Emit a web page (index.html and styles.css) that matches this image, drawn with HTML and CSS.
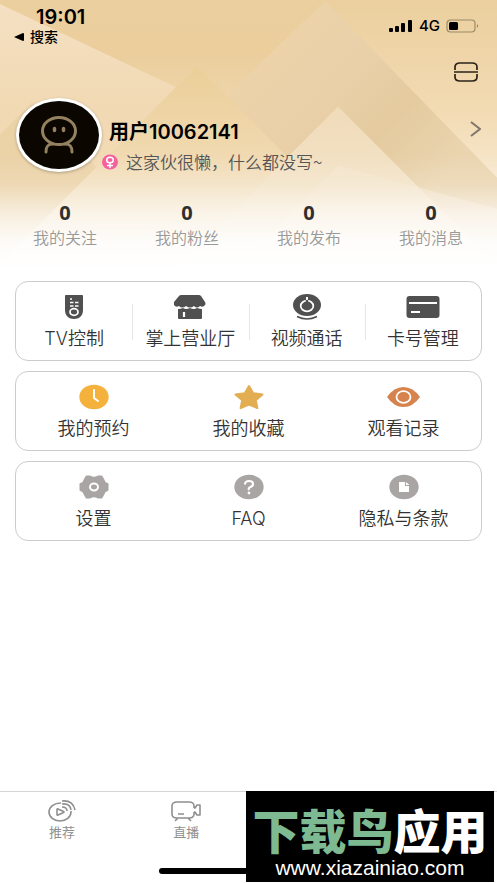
FILE: index.html
```html
<!DOCTYPE html>
<html lang="zh-CN">
<head>
<meta charset="utf-8">
<meta name="viewport" content="width=device-width, initial-scale=1">
<title>我的</title>
<link rel="stylesheet" href="styles.css">
</head>
<body>
<div class="app">
  <header class="hero">
    <svg class="hero-art" viewBox="0 0 497 270" preserveAspectRatio="none" aria-hidden="true">
      <defs>
        <linearGradient id="sky" x1="0" y1="0" x2="0" y2="1"><stop offset="0" stop-color="#ebcf9e"/><stop offset=".2" stop-color="#ebce9c"/><stop offset=".4" stop-color="#efd6ad"/><stop offset="1" stop-color="#f5e3c6"/></linearGradient>
        <linearGradient id="left" x1="0" y1="0" x2="0" y2="1"><stop offset="0" stop-color="#f4e0c2"/><stop offset=".4" stop-color="#f1d9b3"/><stop offset="1" stop-color="#f2dcb8"/></linearGradient>
        <linearGradient id="peak" gradientUnits="userSpaceOnUse" x1="250" y1="50" x2="410" y2="210"><stop offset="0" stop-color="#edd3a9"/><stop offset=".4" stop-color="#e9d0a9"/><stop offset=".65" stop-color="#e4ca9e"/><stop offset="1" stop-color="#ead5b0"/></linearGradient>
        <linearGradient id="gold" x1="0" y1="0" x2="0" y2="1"><stop offset="0" stop-color="#ebcf99"/><stop offset=".4" stop-color="#f0d8ae"/><stop offset=".6" stop-color="#f3e1c2"/></linearGradient>
        <linearGradient id="right" x1="0" y1="0" x2="0" y2="1"><stop offset="0" stop-color="#ebcf9e"/><stop offset=".6" stop-color="#f2dab2"/><stop offset="1" stop-color="#f7e8ce"/></linearGradient>
        <linearGradient id="front" x1="0" y1="0" x2="0" y2="1"><stop offset="0" stop-color="#f0dbb9"/><stop offset=".5" stop-color="#f3e3c7"/></linearGradient>
        <linearGradient id="fade" x1="0" y1="0" x2="0" y2="1"><stop offset="0" stop-color="#fff" stop-opacity="0"/><stop offset=".25" stop-color="#fff" stop-opacity=".15"/><stop offset=".5" stop-color="#fff" stop-opacity=".62"/><stop offset=".75" stop-color="#fff" stop-opacity=".92"/><stop offset="1" stop-color="#fff"/></linearGradient>
      </defs>
      <path fill="url(#sky)" d="M0 0h497v270H0z"/>
      <path fill="url(#left)" d="M0 4 176 87 0 263z"/>
      <path fill="#ebd2a7" d="M0 134 32 102 170 240v30H0z"/>
      <path fill="url(#right)" d="M325 1V0h172v177z"/>
      <path fill="url(#peak)" d="M325 1 220 102v168h277v-93z"/>
      <path fill="url(#gold)" d="M197 66 0 263v7h401z"/>
      <path fill="url(#front)" d="M338 106 174 270h328z"/>
      <path fill="#f5e8d2" d="M338 165 497 208v62H233z" opacity=".5"/>
      <path fill="url(#fade)" d="M0 155h497v115H0z"/>
    </svg>

    <div class="status">
      <div class="status-left">
        <span class="time">19:01</span>
        <a class="back" href="#"><svg width="10" height="8" viewBox="0 0 10 8" aria-hidden="true"><path d="M0 4 9 0q1 0 1 1v6q0 1-1 1z"/></svg>搜索</a>
      </div>
      <div class="status-right">
        <svg width="24" height="12" viewBox="0 0 24 12" aria-hidden="true"><rect y="8" width="4" height="4" rx="1"/><rect x="6" y="6" width="4" height="6" rx="1"/><rect x="12" y="3" width="4" height="9" rx="1"/><rect x="19" width="4" height="12" rx="1"/></svg>
        <span class="network">4G</span>
        <svg width="33" height="14" viewBox="0 0 33 14" aria-hidden="true"><rect x="1" y="1" width="28" height="12" rx="3.5" fill="none" stroke="#9c8a69" stroke-width="1.2"/><rect x="3" y="3" width="9" height="8" rx="1.5"/><path d="M31 5q2 2 0 4z" fill="#8d7b5a"/></svg>
      </div>
    </div>

    <div class="actions">
      <button class="icon-button" type="button" aria-label="扫一扫"><svg width="24" height="20" viewBox="0 0 24 20" fill="none" stroke="#2b241a" stroke-width="1.7"><path d="M1 8V5q0-4 5-4h12q5 0 5 4v3M1 12v3q0 4 5 4h12q5 0 5-4v-3M0 10h24"/></svg></button>
    </div>

    <section class="profile">
      <div class="avatar"><svg width="36" height="38" viewBox="0 0 36 38" fill="none" stroke="#93815f" stroke-width="3" stroke-linecap="round" aria-hidden="true"><ellipse cx="18" cy="15" rx="16.5" ry="13.500"/><path d="M5 36c0-6 2-8 7-8M31 36c0-6-2-8-7-8"/><path d="M13.500 12.500v2M22.500 12.500v2" stroke-width="3.500"/></svg></div>
      <div class="identity">
        <h1 class="name">用户10062141</h1>
        <p class="bio"><svg width="16" height="16" viewBox="0 0 16 16" aria-hidden="true"><ellipse cx="8" cy="8" rx="8" ry="7.500" fill="#f5609e"/><g fill="none" stroke="#fff" stroke-width="1.500"><ellipse cx="8" cy="6" rx="3.300" ry="2.800"/><path d="M8 9v5M5 11.500h6"/></g></svg>这家伙很懒，什么都没写~</p>
      </div>
      <a class="more" href="#" aria-label="个人资料"><svg width="12" height="18" viewBox="0 0 12 18" fill="none" stroke="#80776a" stroke-width="2"><path d="m2 2 9 7-9 7"/></svg></a>
    </section>

    <nav class="stats" aria-label="统计">
      <a href="#"><strong>0</strong><span>我的关注</span></a>
      <a href="#"><strong>0</strong><span>我的粉丝</span></a>
      <a href="#"><strong>0</strong><span>我的发布</span></a>
      <a href="#"><strong>0</strong><span>我的消息</span></a>
    </nav>
  </header>

  <main class="cards">
    <section class="card card-four">
      <a href="#"><svg width="20" height="26" viewBox="0 0 20 26" aria-hidden="true"><path fill="#505050" d="M1 2q0-1 1-1h16q1 0 1 1v14c0 6-4 9-9 9s-9-3-9-9z"/><path stroke="#fff" stroke-width="1.500" d="M6 5h2M6 8.500h3.500M11 8.500h3.500M6 12h3.500M11 12h3.500"/><ellipse cx="10" cy="18" rx="4" ry="3.300" fill="none" stroke="#fff" stroke-width="1.700"/></svg><span>TV控制</span></a>
      <a href="#"><svg width="32" height="26" viewBox="0 0 32 26" aria-hidden="true"><path fill="#505050" d="M7 1h18q1 0 2 1l4 6q1 2 0 3-2 3-5 1-3 3-6 0-4 3-8 0-4 3-7 0-3 2-5-1-1-1 0-3l5-6q1-1 2-1z"/><path fill="#505050" d="M4 15q3 0 5-1 3 2 7 0 4 2 7 0 3 1 5 1v9q0 1-1 1H5q-1 0-1-1z"/><path stroke="#fff" stroke-width="2.200" d="M10 18v5"/></svg><span>掌上营业厅</span></a>
      <a href="#"><svg width="28" height="26" viewBox="0 0 28 26" aria-hidden="true"><ellipse cx="14" cy="11" rx="14" ry="11" fill="#505050"/><g fill="none" stroke="#fff"><ellipse cx="14" cy="12" rx="6.300" ry="5.300" stroke-width="1.700"/><path d="M14 3v3" stroke-width="2"/></g><circle cx="14" cy="7" r="1.300" fill="#505050"/><path fill="none" stroke="#505050" stroke-width="1.600" d="M4 22.500q10 5 20 0"/></svg><span>视频通话</span></a>
      <a href="#"><svg width="34" height="24" viewBox="0 0 34 24" aria-hidden="true"><rect x=".5" y="1" width="33" height="22" rx="3" fill="#505050"/><path stroke="#fff" stroke-width="2" d="M3 8h28M5 17h9"/></svg><span>卡号管理</span></a>
    </section>

    <section class="card card-three">
      <a href="#"><svg width="30" height="26" viewBox="0 0 30 26" aria-hidden="true"><ellipse cx="15" cy="13" rx="14.700" ry="12.200" fill="#f4b13c"/><path fill="none" stroke="#fff" stroke-width="2" stroke-linecap="round" stroke-linejoin="round" d="M15 6v8l4 3"/></svg><span>我的预约</span></a>
      <a href="#"><svg width="30" height="26" viewBox="0 0 30 26" aria-hidden="true"><path fill="#e3ad52" stroke="#e3ad52" stroke-width="2" stroke-linejoin="round" d="m15 2 4.200 7.200 9.300 1.400-6.700 5.600 1.600 7.900L15 20.500 6.600 24.100l1.600-7.900-6.700-5.600 9.300-1.400z"/></svg><span>我的收藏</span></a>
      <a href="#"><svg width="33" height="22" viewBox="0 0 33 22" aria-hidden="true"><path fill="#d6834d" d="M0 11Q7 1 16.500 1T33 11q-7 10-16.500 10T0 11z"/><ellipse cx="16.500" cy="11" rx="7" ry="5.800" fill="none" stroke="#fff" stroke-width="1.800"/></svg><span>观看记录</span></a>
    </section>

    <section class="card card-three">
      <a href="#"><svg width="30" height="24" viewBox="0 0 30 24" aria-hidden="true"><path fill="#a8a5a4" stroke="#a8a5a4" stroke-width="2" stroke-linejoin="round" d="M7.500 1.500H11q4 2.500 8 0h3.500L25 6q0 2 3.500 3v6Q25 16 25 18l-2.500 4.500H19q-4-2.500-8 0H7.500L5 18q0-2-3.500-3V9Q5 8 5 6z"/><ellipse cx="15" cy="12" rx="4" ry="3.400" fill="none" stroke="#fff" stroke-width="2"/></svg><span>设置</span></a>
      <a href="#"><svg width="30" height="26" viewBox="0 0 30 26" aria-hidden="true"><ellipse cx="15" cy="13" rx="14.700" ry="12.200" fill="#a8a5a4"/><path fill="none" stroke="#fff" stroke-width="2.200" d="M11 10.500q0-3.500 4-3.500t4 3q0 2-2.500 3T15 16"/><circle cx="15" cy="19" r="1.400" fill="#fff"/></svg><span>FAQ</span></a>
      <a href="#"><svg width="30" height="26" viewBox="0 0 30 26" aria-hidden="true"><ellipse cx="15" cy="13" rx="14.700" ry="12.200" fill="#a8a5a4"/><path fill="#fff" d="M10 8h6v4h4v6H10zM17 8l3.500 3H17z"/></svg><span>隐私与条款</span></a>
    </section>
  </main>

  <footer class="dock">
    <nav class="tabs" aria-label="主导航">
      <a href="#"><svg width="28" height="22" viewBox="0 0 28 22" fill="none" stroke="#8f8f8f" stroke-width="1.600" aria-hidden="true"><path d="M13 3C6 3 1 7 1 12s5 9 11 9 11-4 11-9v-1"/><path d="M9 9.500q0-1 1-.6l5.500 2.500q1 .6 0 1.200L10 15q-1 .4-1-.6zM14 7q5 0 5 4M14 4q8-1 9 6M14 1q11-1 13 9"/></svg><span>推荐</span></a>
      <a href="#"><svg width="30" height="22" viewBox="0 0 30 22" fill="none" stroke="#8f8f8f" stroke-width="1.600" stroke-linejoin="round" aria-hidden="true"><path d="M23 8V6q0-4-5-4H6Q1 2 1 6v8q0 4 5 4h12q5 0 5-4v-2M23 8h1l2-3h3v10h-3l-2-3h-1M7 18l-3 3M17 18l3 3M7 14h6"/></svg><span>直播</span></a>
    </nav>
    <div class="home-bar"></div>
  </footer>

  <aside class="badge">
    <div class="badge-title"><span>下载鸟</span>应用</div>
    <div class="badge-url">www.xiazainiao.com</div>
  </aside>
</div>
</body>
</html>
```
FILE: styles.css
```css
* { box-sizing: border-box; }

body {
  margin: 0;
  background: #fff;
  color: #333;
  font-family: "Liberation Sans", "Noto Sans CJK SC", sans-serif;
}

a { color: inherit; text-decoration: none; }
svg { display: block; flex: none; }

.app {
  position: relative;
  display: flex;
  flex-direction: column;
  min-height: 100vh;
  overflow: hidden;
}

.hero { position: relative; padding-bottom: 22px; }

.hero-art {
  position: absolute;
  inset: 0;
  z-index: -1;
  width: 100%;
  height: 100%;
}

.status {
  display: flex;
  justify-content: space-between;
  padding: 7px 18px 0 14px;
  color: #000;
}

.status-left { display: flex; flex-direction: column; }

.time {
  padding-left: 22px;
  font: 600 20px/20px Inter, sans-serif;
}

.back {
  display: flex;
  align-items: center;
  gap: 6px;
  font-size: 14px;
  font-weight: 500;
  line-height: 20px;
}

.status-right {
  display: flex;
  align-items: center;
  gap: 6px;
  height: 38px;
}

.network { font: 500 15px/20px Inter, sans-serif; }

.actions {
  display: flex;
  justify-content: flex-end;
  padding: 15px 19px 0;
}

.icon-button {
  padding: 0;
  border: 0;
  background: none;
}

.profile {
  display: flex;
  padding: 16px 16px 0;
}

.avatar {
  display: flex;
  flex: none;
  align-items: center;
  justify-content: center;
  width: 86px;
  height: 74px;
  border: 3px solid #fff;
  border-radius: 50%;
  background: #0b0700;
  box-shadow: 0 1px 3px #0004;
}

.identity { flex: 1; padding-top: 20px; }

.name {
  margin: 0;
  padding-left: 7px;
  color: #000;
  font: 600 20px/28px Inter, "Noto Sans CJK SC", sans-serif;
}

.bio {
  display: flex;
  align-items: center;
  gap: 8px;
  margin: 4px 0 0;
  color: #555;
  font: 350 17px/24px "Noto Sans CJK SC", sans-serif;
}

.more { align-self: flex-start; padding-top: 22px; }

.stats {
  display: grid;
  grid-template-columns: repeat(4, 1fr);
  padding: 27px 5px 0 4px;
  text-align: center;
}

.stats strong {
  display: block;
  color: #2f2f2f;
  font: 700 20px/24px "Open Sans", sans-serif;
}

.stats span {
  display: block;
  color: #999;
  font: 350 16px/24px "Noto Sans CJK SC", sans-serif;
}

.cards {
  display: grid;
  gap: 10px;
  padding: 10px 15px;
}

.card {
  display: grid;
  padding: 11px 0 9px;
  border: 1px solid #ccc;
  border-radius: 13px;
  background: #fff;
}

.card-four { grid-template-columns: repeat(4, 1fr); }
.card-three { grid-template-columns: repeat(3, 1fr); }

.card a {
  display: grid;
  grid-template-rows: 28px 24px;
  gap: 6px;
  place-items: center;
  color: #333;
  font: 350 18px/24px Inter, "Noto Sans CJK SC", sans-serif;
  white-space: nowrap;
}

.card-four a + a {
  background: linear-gradient(#e6e6e6, #e6e6e6) left center / 1px 36px no-repeat;
}

.dock {
  margin-top: auto;
  padding-bottom: 9px;
  border-top: 1px solid #d4d4d4;
}

.tabs {
  display: grid;
  grid-template-columns: repeat(4, 1fr);
  padding-top: 8px;
}

.tabs a {
  display: grid;
  gap: 1px;
  justify-items: center;
  color: #8f8f8f;
  font: 400 13px/18px "Noto Sans CJK SC", sans-serif;
}

.home-bar {
  width: 36%;
  height: 6px;
  margin: 27px auto 0;
  border-radius: 3px;
  background: #000;
}

.badge {
  position: absolute;
  right: 3px;
  bottom: 1px;
  width: 248px;
  height: 91px;
  padding-top: 12px;
  background: #000;
  color: #fff;
  text-align: center;
  white-space: nowrap;
}

.badge-title { font: 900 47px/52px "Noto Sans CJK SC", sans-serif; }
.badge-title span { color: #7dba91; }
.badge-url { font: 21px/26px "Liberation Sans", sans-serif; }
```
